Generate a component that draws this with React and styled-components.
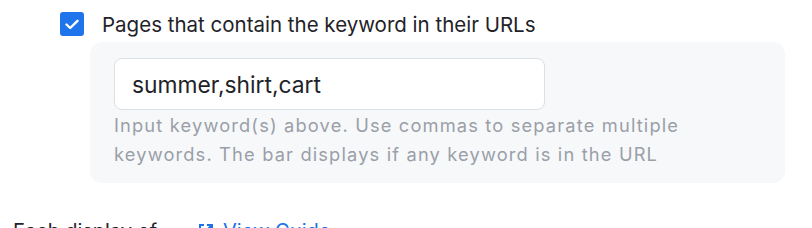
import React from "react"
import styled, { createGlobalStyle } from "styled-components"

const Global = createGlobalStyle`
  body {
    margin: 0;
    background: #fff;
    font-family: Inter, "Liberation Sans", Arial, sans-serif;
    overflow: hidden;
  }
`

const Page = styled.div`
  width: 812px;
  height: 228px;
  overflow: hidden;
  padding: 12px 0 0 0;
  box-sizing: border-box;
`

const OptionRow = styled.label`
  display: flex;
  align-items: center;
  gap: 18px;
  margin-left: 60px;
  height: 24px;
`

const Check = styled.span`
  width: 24px;
  height: 24px;
  border-radius: 3px;
  background: #1f74ec;
  display: flex;
  align-items: center;
  justify-content: center;
  flex-shrink: 0;
`

const Label = styled.span`
  font-size: 20.5px;
  color: #1f2329;
`

const Panel = styled.div`
  margin: 6px 27px 0 90px;
  background: #f7f8fa;
  border-radius: 12px;
  padding: 16px 24px 14px 24px;
`

const Input = styled.div`
  width: 431px;
  height: 52px;
  box-sizing: border-box;
  border: 1px solid #dcdfe4;
  border-radius: 8px;
  background: #fff;
  display: flex;
  align-items: center;
  padding-left: 17px;
  font-size: 22.8px;
  color: #1f2329;
`

const Help = styled.p`
  margin: 1px 0 0 0;
  width: 600px;
  font-size: 18.3px;
  letter-spacing: 1.15px;
  line-height: 29px;
  color: #9a9fa8;
`

const Footer = styled.div`
  margin: 36px 0 0 13px;
  display: flex;
  align-items: center;
  font-size: 20px;
  color: #1f2329;
`

const Link = styled.a`
  display: flex;
  align-items: center;
  gap: 8px;
  color: #1a73e8;
  text-decoration: none;
  margin-left: 40px;
`

export default function App() {
  return (
    <Page>
      <Global />
      <OptionRow>
        <Check>
          <svg width="14" height="11" viewBox="0 0 14 11">
            <path d="M1.5 5.5 L5.2 9 L12.5 1.8" fill="none" stroke="#fff" strokeWidth="2.4" strokeLinecap="round" strokeLinejoin="round" />
          </svg>
        </Check>
        <Label>Pages that contain the keyword in their URLs</Label>
      </OptionRow>
      <Panel>
        <Input>summer,shirt,cart</Input>
        <Help>
          Input keyword(s) above. Use commas to separate multiple keywords. The bar displays if any keyword is in the URL
        </Help>
      </Panel>
      <Footer>
        <span>Each display of</span>
        <Link href="#">
          <svg width="18" height="18" viewBox="0 0 18 18" fill="none" stroke="#1a73e8" strokeWidth="2">
            <path d="M7 3H3v12h12v-4" />
            <path d="M10 3h5v5M15 3l-7 7" />
          </svg>
          View Guide
        </Link>
      </Footer>
    </Page>
  )
}
